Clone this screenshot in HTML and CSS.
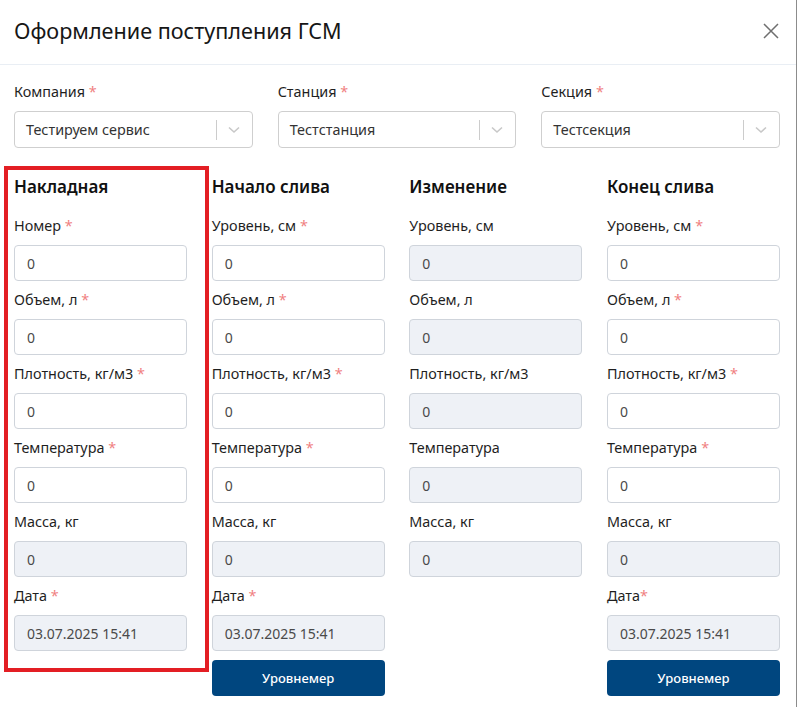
FILE: index.html
```html
<!DOCTYPE html>
<html lang="ru">
<head>
<meta charset="utf-8">
<link rel="stylesheet" href="styles.css">
</head>
<body>
<div class="modal">
  <div class="modal-header">
    <h1 class="title">Оформление поступления ГСМ</h1>
    <button class="close" aria-label="Закрыть">
      <svg width="16" height="16" viewBox="0 0 16 16"><path d="M1 1L15 15M15 1L1 15" stroke="#6f6f6f" stroke-width="1.5" fill="none"/></svg>
    </button>
  </div>
  <div class="modal-body">
    <div class="selects">
      <div class="field">
        <label class="label">Компания <span class="req">*</span></label>
        <div class="select"><span class="select-value">Тестируем сервис</span><span class="sep"></span><svg class="chev" width="12" height="8" viewBox="0 0 12 8"><path d="M1 1.5L6 6L11 1.5" stroke="#c8c8c8" stroke-width="1.6" fill="none"/></svg></div>
      </div>
      <div class="field">
        <label class="label">Станция <span class="req">*</span></label>
        <div class="select"><span class="select-value">Тестстанция</span><span class="sep"></span><svg class="chev" width="12" height="8" viewBox="0 0 12 8"><path d="M1 1.5L6 6L11 1.5" stroke="#c8c8c8" stroke-width="1.6" fill="none"/></svg></div>
      </div>
      <div class="field">
        <label class="label">Секция <span class="req">*</span></label>
        <div class="select"><span class="select-value">Тестсекция</span><span class="sep"></span><svg class="chev" width="12" height="8" viewBox="0 0 12 8"><path d="M1 1.5L6 6L11 1.5" stroke="#c8c8c8" stroke-width="1.6" fill="none"/></svg></div>
      </div>
    </div>

    <div class="sections">
      <div class="col">
        <h2 class="col-title">Накладная</h2>
        <label class="label">Номер <span class="req">*</span></label>
        <div class="input">0</div>
        <label class="label">Объем, л <span class="req">*</span></label>
        <div class="input">0</div>
        <label class="label">Плотность, кг/м3 <span class="req">*</span></label>
        <div class="input">0</div>
        <label class="label">Температура <span class="req">*</span></label>
        <div class="input">0</div>
        <label class="label">Масса, кг</label>
        <div class="input disabled">0</div>
        <label class="label">Дата <span class="req">*</span></label>
        <div class="input disabled">03.07.2025 15:41</div>
      </div>
      <div class="col">
        <h2 class="col-title">Начало слива</h2>
        <label class="label">Уровень, см <span class="req">*</span></label>
        <div class="input">0</div>
        <label class="label">Объем, л <span class="req">*</span></label>
        <div class="input">0</div>
        <label class="label">Плотность, кг/м3 <span class="req">*</span></label>
        <div class="input">0</div>
        <label class="label">Температура <span class="req">*</span></label>
        <div class="input">0</div>
        <label class="label">Масса, кг</label>
        <div class="input disabled">0</div>
        <label class="label">Дата <span class="req">*</span></label>
        <div class="input disabled">03.07.2025 15:41</div>
        <button class="btn">Уровнемер</button>
      </div>
      <div class="col">
        <h2 class="col-title">Изменение</h2>
        <label class="label">Уровень, см</label>
        <div class="input disabled">0</div>
        <label class="label">Объем, л</label>
        <div class="input disabled">0</div>
        <label class="label">Плотность, кг/м3</label>
        <div class="input disabled">0</div>
        <label class="label">Температура</label>
        <div class="input disabled">0</div>
        <label class="label">Масса, кг</label>
        <div class="input disabled">0</div>
      </div>
      <div class="col">
        <h2 class="col-title">Конец слива</h2>
        <label class="label">Уровень, см <span class="req">*</span></label>
        <div class="input">0</div>
        <label class="label">Объем, л <span class="req">*</span></label>
        <div class="input">0</div>
        <label class="label">Плотность, кг/м3 <span class="req">*</span></label>
        <div class="input">0</div>
        <label class="label">Температура <span class="req">*</span></label>
        <div class="input">0</div>
        <label class="label">Масса, кг</label>
        <div class="input disabled">0</div>
        <label class="label">Дата<span class="req">*</span></label>
        <div class="input disabled">03.07.2025 15:41</div>
        <button class="btn">Уровнемер</button>
      </div>
    </div>
  </div>
  <div class="highlight"></div>
</div>
</body>
</html>
```

FILE: styles.css
```css
* { box-sizing: border-box; }
html, body { margin: 0; padding: 0; background: #ffffff; }
body {
  font-family: "Noto Sans", "Open Sans", sans-serif;
  color: #1f1f1f;
}
.modal {
  position: relative;
  width: 797px;
  height: 707px;
  background: #ffffff;
  border-right: 1px solid #8c8c8c;
}
.modal-header {
  height: 65px;
  display: flex;
  align-items: center;
  justify-content: space-between;
  padding: 0 17px 0 14px;
  border-bottom: 1px solid #e9eef4;
}
.title {
  margin: 0;
  font-size: 21.6px;
  font-weight: 400;
  color: #161616;
  line-height: 28px;
  padding-bottom: 2px;
}
.close {
  border: 0;
  background: none;
  padding: 0;
  width: 16px;
  height: 16px;
  display: flex;
  margin-bottom: 2px;
}
.modal-body {
  padding: 17px 16px 0 14px;
}
.selects {
  display: grid;
  grid-template-columns: repeat(3, 1fr);
  column-gap: 25px;
}
.field { display: flex; flex-direction: column; }
.label {
  display: block;
  font-size: 14.4px;
  line-height: 20px;
  color: #1f1f1f;
  margin: 9px 0;
}
.selects .label { margin: 0 0 9px; }
.req { color: #f07f7f; }
.select {
  height: 37px;
  border: 1px solid #cfcfcf;
  border-radius: 4px;
  display: flex;
  align-items: center;
  padding-left: 11px;
}
.select-value {
  flex: 1;
  font-size: 14.4px;
  color: #333333;
}
.sep {
  width: 1px;
  height: 20px;
  background: #cccccc;
  margin-right: 11px;
}
.chev { margin-right: 12px; }

.sections {
  display: grid;
  grid-template-columns: repeat(4, 1fr);
  column-gap: 24.6px;
  margin-top: 27px;
}
.col { display: flex; flex-direction: column; }
.col-title {
  margin: 0 0 8px;
  font-size: 17px;
  font-weight: 600;
  line-height: 24px;
  color: #111111;
}
.input {
  height: 36px;
  border: 1px solid #cfd4db;
  border-radius: 4px;
  display: flex;
  align-items: center;
  padding-left: 12px;
  font-size: 14px;
  color: #4a4a4a;
  background: #ffffff;
}
.input.disabled { background: #eef1f6; }
.btn {
  margin-top: 9px;
  height: 36px;
  border: 0;
  border-radius: 4px;
  background: #00467f;
  color: #ffffff;
  font-family: inherit;
  font-size: 13px;
  font-weight: 500;
}
.highlight {
  position: absolute;
  left: 4px;
  top: 166px;
  width: 205px;
  height: 506px;
  border: 4px solid #e31e24;
  pointer-events: none;
}
```
